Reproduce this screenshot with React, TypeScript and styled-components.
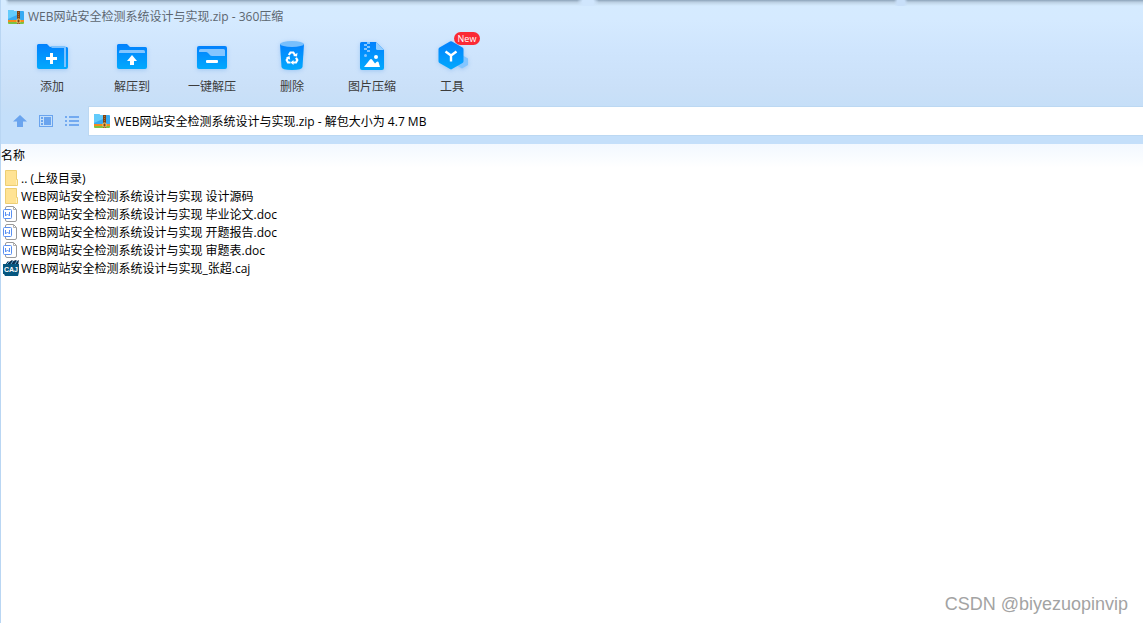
import React from "react";
import styled, { createGlobalStyle } from "styled-components";

const GlobalStyle = createGlobalStyle`
  * { box-sizing: border-box; }
  body {
    margin: 0;
    background: #fff;
    color: #000;
    font-family: "Open Sans", "Noto Sans CJK SC", sans-serif;
    font-size: 12px;
    line-height: 18px;
  }
  button, input { font: inherit; color: inherit; }
`;

const Window = styled.div`
  display: flex;
  flex-direction: column;
  min-height: 100vh;
  border-left: 1px solid #b9d6f3;
  position: relative;
`;

const Chrome = styled.header`
  position: relative;
  background: linear-gradient(#d5ebff 0, #d5eaff 20px, #cfe5fd 50px, #cae0f8 90px, #c6dff8 106px, #c4dffa 116px);
  padding-bottom: 8px;
`;

const TopShadow = styled.div`
  position: absolute;
  inset: 0 0 auto 0;
  height: 6px;
  background:
    radial-gradient(ellipse 8px 8px at 0 3px, #d5ebff 60%, transparent),
    radial-gradient(ellipse 11px 9px at 51.4% 2px, #d0e6fd 50%, transparent),
    radial-gradient(ellipse 7px 9px at 78.8% 2px, #c8dff9 50%, transparent),
    linear-gradient(#8ea5bb 0, #9fb5ca 1px, #b9cde0 2px, #c9def1 4px, #d5ebff 6px);
`;

const TitleBar = styled.div`
  display: flex;
  align-items: center;
  gap: 4px;
  height: 33px;
  padding-left: 7px;
`;

const Title = styled.h1`
  margin: 0;
  font-size: 12px;
  font-weight: 400;
  color: #5c6670;
`;

const Toolbar = styled.nav`
  display: flex;
  padding-left: 11px;
  height: 73px;
`;

const Tool = styled.button`
  display: flex;
  flex-direction: column;
  align-items: center;
  gap: 3px;
  width: 80px;
  padding: 4px 0 0;
  border: 0;
  background: none;
  color: #3c3c3c;
  white-space: nowrap;
`;

const ToolIcon = styled.span`
  position: relative;
  width: 40px;
  height: 38px;
  svg { display: block; filter: drop-shadow(0 1px 2px rgba(60, 140, 230, 0.3)); }
`;

const Badge = styled.span`
  position: absolute;
  left: 22px;
  top: -5px;
  width: 26px;
  height: 13px;
  border-radius: 7px;
  background: #fb2a34;
  color: #fff;
  font-size: 9px;
  line-height: 13px;
  text-align: center;
`;

const AddressRow = styled.div`
  display: flex;
  align-items: center;
  height: 30px;
`;

const ViewButtons = styled.div`
  display: flex;
  gap: 10px;
  padding: 0 8px 0 11px;
`;

const ViewButton = styled.button`
  display: block;
  width: 16px;
  height: 16px;
  padding: 0;
  border: 0;
  background: none;
  svg { display: block; }
`;

const AddressBox = styled.label`
  flex: 1;
  display: flex;
  align-items: center;
  gap: 4px;
  height: 30px;
  padding-left: 5px;
  border: solid #bcd8f2;
  border-width: 1px 0 1px 1px;
  background: #fff;
`;

const AddressInput = styled.input`
  flex: 1;
  min-width: 0;
  border: 0;
  padding: 2px 0 0;
  outline: 0;
  background: none;
`;

const Main = styled.main`
  flex: 1;
  background: linear-gradient(#f2f8ff, #fff 24px);
`;

const FileTable = styled.table`
  width: 100%;
  border-collapse: collapse;
  th {
    padding: 2px 0 4px;
    height: 25px;
    font-weight: 400;
    text-align: left;
  }
  td { padding: 0; }
`;

const FileCell = styled.div`
  display: flex;
  align-items: center;
  gap: 2px;
  height: 18px;
  padding-left: 2px;
  white-space: pre;
`;

const FileName = styled.span`
  padding-top: 2px;
`;

const Watermark = styled.footer`
  position: absolute;
  right: 15px;
  bottom: 7px;
  font-family: "Liberation Sans", sans-serif;
  font-size: 18px;
  line-height: 24px;
  color: #a3a3a3;
`;

const Gradient = ({ id }: { id: string }) => (
  <linearGradient id={id} x1="0" y1="0" x2="0" y2="1">
    <stop offset="0" stopColor="#0381fd" />
    <stop offset="1" stopColor="#02a9fd" />
  </linearGradient>
);

const AddIcon = () => (
  <svg width="40" height="38" viewBox="0 0 40 38">
    <defs><Gradient id="add" /></defs>
    <path d="M5 8.500Q5 7 6.500 7H15l3 3h16.500Q36 10 36 11.500V30q0 2-2 2H7q-2 0-2-2Z" fill="url(#add)" />
    <path d="M18 9h14.500Q34 9 34 10.500V30h-2V11H20Z" fill="#7cc2ff" />
    <path d="M18 16h3v4h4v3h-4v4h-3v-4h-4v-3h4Z" fill="#fff" />
  </svg>
);

const ExtractIcon = () => (
  <svg width="40" height="38" viewBox="0 0 40 38">
    <defs><Gradient id="extract" /></defs>
    <path d="M5 8.500Q5 7 6.500 7H15l3 3h15.500Q35 10 35 11.500V30q0 2-2 2H7q-2 0-2-2Z" fill="url(#extract)" />
    <path d="M7 16v-1.500Q7 13 8.500 13h23q1.500 0 1.500 1.500V16Z" fill="#83c5ff" />
    <path d="m20 18 5 6h-3v4h-4v-4h-3Z" fill="#fff" />
  </svg>
);

const OneClickIcon = () => (
  <svg width="40" height="38" viewBox="0 0 40 38">
    <defs><Gradient id="oneclick" /></defs>
    <rect x="5" y="9" width="30" height="23" rx="2" fill="url(#oneclick)" />
    <path d="M7 15v-1.500Q7 12 8.500 12h23q1.500 0 1.500 1.500V19H20q-2 0-3-2l-1-1q-1-1-2-1Z" fill="#83c5ff" />
    <rect x="14" y="23" width="12" height="3" rx="1" fill="#fff" />
  </svg>
);

const DeleteIcon = () => (
  <svg width="40" height="38" viewBox="0 0 40 38">
    <defs><Gradient id="delete" /></defs>
    <path d="M8 7h24l-1.500 23q-.3 3-10.500 3T9.500 30Z" fill="url(#delete)" />
    <ellipse cx="20" cy="7" rx="12" ry="3" fill="#78bffd" />
    <g fill="none" stroke="#fff" strokeWidth="2.200">
      <path d="m16.800 18 1.700-2.500h2.800l2 3" />
      <path d="m24 20.800 1.300 2.200-1.300 2.500h-3" />
      <path d="M18.500 25.500H16L14.700 23l1.600-2.800" />
    </g>
    <path d="m21 19 4 .500.500-3.700ZM21.500 23l-3 2.500 3 2.500ZM14 20.500l3.500-1.500.7 3.800Z" fill="#fff" />
  </svg>
);

const PictureIcon = () => (
  <svg width="40" height="38" viewBox="0 0 40 38">
    <defs><Gradient id="picture" /></defs>
    <path d="M8 6.500Q8 5 9.500 5H24l8 8v18q0 2-2 2H10q-2 0-2-2Z" fill="url(#picture)" />
    <path d="M24 5v6.500q0 1.500 1.500 1.500H32Z" fill="#93cdff" />
    <path d="M12 7h3v2h-3ZM15 5h3v2h-3ZM15 9h3v2h-3ZM12 11h3v2h-3ZM15 13h3v2h-3Z" fill="#83c5ff" />
    <circle cx="13.500" cy="18.500" r="1.500" fill="#83c5ff" />
    <circle cx="24" cy="20" r="2" fill="#fff" />
    <path d="m12 30 6-7.500q1-1 2 0l3 4 1.500-1.500q1-1 2 0L28 30Z" fill="#fff" />
  </svg>
);

const ToolsIcon = () => (
  <svg width="40" height="38" viewBox="0 0 40 38">
    <defs><Gradient id="tools" /></defs>
    <path d="m30 18 6 3.500V28l-6 3.500-6-3.500v-6.500Z" fill="#83c5ff" />
    <path d="M18 4.600q1-.6 2 0l10.500 6q1 .6 1 1.700v12q0 1.200-1 1.800l-10.500 6q-1 .6-2 0l-10.500-6q-1-.6-1-1.800v-12q0-1.100 1-1.700Z" fill="url(#tools)" />
    <path d="m13.500 14.500 5.500 4 5.500-4M19 18v6.500" fill="none" stroke="#fff" strokeWidth="2.400" />
  </svg>
);

const ArchiveIcon = () => (
  <svg width="16" height="16" viewBox="0 0 16 16">
    <path d="M0 2q0-1 1-1h4l1 1h9q1 0 1 1v9H0Z" fill="#38aaf2" />
    <path d="M0 2q0-1 1-1h4l1 1h3v4L0 10Z" fill="#62cbfb" />
    <path d="M0 11h16v2H0Z" fill="#f58a1c" />
    <path d="M0 13h16v1q0 1-1 1H1q-1 0-1-1Z" fill="#7cc242" />
    <path d="M9 2h3v13H9Z" fill="#7d4417" />
    <path d="M10 3h1v1h-1ZM10 5h1v1h-1ZM10 7h1v1h-1Z" fill="#b06f2c" />
    <rect x="9" y="10" width="3" height="4" rx="1" fill="#7a4210" stroke="#f6cf72" />
  </svg>
);

const UpIcon = () => (
  <svg width="16" height="16" viewBox="0 0 16 16">
    <path d="m8 2 7 6.500h-4V14H5V8.500H1Z" fill="#6aa4ee" />
  </svg>
);

const PreviewIcon = () => (
  <svg width="16" height="16" viewBox="0 0 16 16" fill="#6aa4ee">
    <path d="M1 2h14v12H1ZM2 3v10h12V3Z" fillRule="evenodd" />
    <path d="M3 4h2v2H3ZM3 7h2v2H3ZM3 10h2v2H3ZM6 4h7v8H6Z" />
  </svg>
);

const ListIcon = () => (
  <svg width="16" height="16" viewBox="0 0 16 16" fill="#6aa4ee">
    <path d="M1 3h2v2H1ZM1 7h2v2H1ZM1 11h2v2H1ZM5 3h10v2H5ZM5 7h10v2H5ZM5 11h10v2H5Z" opacity=".9" />
  </svg>
);

const FolderIcon = () => (
  <svg width="16" height="16" viewBox="0 0 16 16">
    <path d="M2.500.5h11v9h1v6h-12Z" fill="#ffe394" stroke="#edce73" />
    <path d="M13 10h1v5h-1Z" fill="#fff0bd" />
  </svg>
);

const DocIcon = () => (
  <svg width="16" height="16" viewBox="0 0 16 16">
    <path d="M2.500 2q0-1.500 1.500-1.500h6.500l3 3V14q0 1.500-1.500 1.500H4q-1.500 0-1.500-1.500Z" fill="#fff" stroke="#9a9a9a" />
    <path d="M10.500.5v3h3" fill="none" stroke="#b0b0b0" />
    <rect x=".5" y="3.500" width="8" height="9" rx="1" fill="#fff" stroke="#5990f2" />
    <path d="M2.500 6v4l2-2 2 2V6" fill="none" stroke="#5990f2" />
  </svg>
);

const CajIcon = () => (
  <svg width="16" height="16" viewBox="0 0 16 16">
    <path d="m2 5 3-4 1 1 3-2 1 1 3-1 1 1 2-1-1 5Z" fill="#0b2f50" />
    <path d="m4 4 2-2M8 4l2-3M12 4l2-3" stroke="#5fb0dc" />
    <path d="M0 4h16v8l-1 4H2l-1-2H0Z" fill="#06567f" />
    <text
      x="8"
      y="12"
      fill="#fff"
      fontFamily="Liberation Sans, sans-serif"
      fontSize="7"
      fontWeight="700"
      textAnchor="middle"
    >
      CAJ
    </text>
  </svg>
);

const tools = [
  { label: "添加", Icon: AddIcon },
  { label: "解压到", Icon: ExtractIcon },
  { label: "一键解压", Icon: OneClickIcon },
  { label: "删除", Icon: DeleteIcon },
  { label: "图片压缩", Icon: PictureIcon },
  { label: "工具", Icon: ToolsIcon, badge: "New" },
];

const views = [
  { label: "向上", Icon: UpIcon },
  { label: "预览", Icon: PreviewIcon },
  { label: "列表", Icon: ListIcon },
];

const files = [
  { name: ".. (上级目录)", Icon: FolderIcon },
  { name: "WEB网站安全检测系统设计与实现 设计源码", Icon: FolderIcon },
  { name: "WEB网站安全检测系统设计与实现 毕业论文.doc", Icon: DocIcon },
  { name: "WEB网站安全检测系统设计与实现 开题报告.doc", Icon: DocIcon },
  { name: "WEB网站安全检测系统设计与实现 审题表.doc", Icon: DocIcon },
  { name: "WEB网站安全检测系统设计与实现_张超.caj", Icon: CajIcon },
];

export default function App() {
  return (
    <>
      <GlobalStyle />
      <Window>
        <Chrome>
          <TopShadow />
          <TitleBar>
            <ArchiveIcon />
            <Title>WEB网站安全检测系统设计与实现.zip - 360压缩</Title>
          </TitleBar>
          <Toolbar>
            {tools.map(({ label, Icon, badge }) => (
              <Tool key={label} type="button">
                <ToolIcon>
                  <Icon />
                  {badge && <Badge>{badge}</Badge>}
                </ToolIcon>
                {label}
              </Tool>
            ))}
          </Toolbar>
          <AddressRow>
            <ViewButtons>
              {views.map(({ label, Icon }) => (
                <ViewButton key={label} type="button" aria-label={label}>
                  <Icon />
                </ViewButton>
              ))}
            </ViewButtons>
            <AddressBox>
              <ArchiveIcon />
              <AddressInput
                aria-label="路径"
                defaultValue="WEB网站安全检测系统设计与实现.zip - 解包大小为 4.7 MB"
              />
            </AddressBox>
          </AddressRow>
        </Chrome>
        <Main>
          <FileTable>
            <thead>
              <tr><th scope="col">名称</th></tr>
            </thead>
            <tbody>
              {files.map(({ name, Icon }) => (
                <tr key={name}>
                  <td>
                    <FileCell>
                      <Icon />
                      <FileName>{name}</FileName>
                    </FileCell>
                  </td>
                </tr>
              ))}
            </tbody>
          </FileTable>
        </Main>
        <Watermark>CSDN @biyezuopinvip</Watermark>
      </Window>
    </>
  );
}
